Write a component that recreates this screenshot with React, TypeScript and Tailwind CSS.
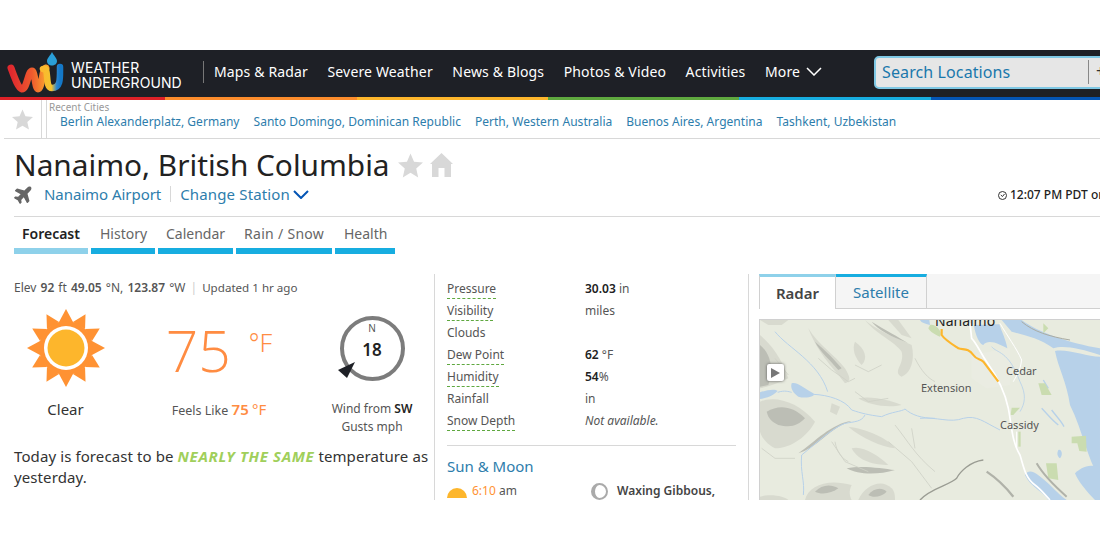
import { FaPlane } from "react-icons/fa";

const navItems = ["Maps & Radar", "Severe Weather", "News & Blogs", "Photos & Video", "Activities"];

const recentCities = [
  "Berlin Alexanderplatz, Germany",
  "Santo Domingo, Dominican Republic",
  "Perth, Western Australia",
  "Buenos Aires, Argentina",
  "Tashkent, Uzbekistan",
];

const tabs = [
  { label: "Forecast", width: "w-[74px]", bar: "bg-[#8ed1ea]", text: "pl-[8px] text-[#222] font-semibold" },
  { label: "History", width: "w-[64px]", bar: "bg-[#17ade0]", text: "pl-[9px] text-[#666]" },
  { label: "Calendar", width: "w-[75px]", bar: "bg-[#17ade0]", text: "pl-[8px] text-[#666]" },
  { label: "Rain / Snow", width: "w-[96px]", bar: "bg-[#17ade0]", text: "pl-[8px] tracking-[0.3px] text-[#666]" },
  { label: "Health", width: "w-[60px]", bar: "bg-[#17ade0]", text: "pl-[9px] text-[#666]" },
];

const conditions = [
  { label: "Pressure", dotted: true, value: <><b className="font-semibold text-[#222]">30.03</b> in</> },
  { label: "Visibility", dotted: true, value: "miles" },
  { label: "Clouds", dotted: false, value: "" },
  { label: "Dew Point", dotted: true, value: <><b className="font-semibold text-[#222]">62</b> °F</> },
  { label: "Humidity", dotted: true, value: <><b className="font-semibold text-[#222]">54</b>%</> },
  { label: "Rainfall", dotted: false, value: "in" },
  { label: "Snow Depth", dotted: true, value: <i>Not available.</i> },
];

const Chevron = ({ strokeWidth, className }: { strokeWidth: number; className?: string }) => (
  <svg width="16" height="9" viewBox="0 0 16 9" fill="none" className={className}>
    <path d="M1 1 L8 8 L15 1" stroke="currentColor" strokeWidth={strokeWidth} />
  </svg>
);

const SolidStar = ({ size }: { size: number }) => (
  <svg width={size} height={size} viewBox="0 0 24 24">
    <polygon points="12,0.5 15.4,8.4 24,9.2 17.5,14.9 19.4,23.4 12,19 4.6,23.4 6.5,14.9 0,9.2 8.6,8.4" fill="#d8d8d8" />
  </svg>
);

const House = () => (
  <svg width="23" height="24" viewBox="0 0 23 24">
    <path d="M11.5 0 L23 11 L21 11 L21 24 L14.5 24 L14.5 15 L8.5 15 L8.5 24 L2 24 L2 11 L0 11 Z" fill="#d8d8d8" />
  </svg>
);

const Logo = () => (
  <svg width="60" height="47" viewBox="0 0 60 47" fill="none" className="shrink-0">
    <path d="M6 18 C9 26 13 38 17 39 C22 39 23 21 27 21 C30 21 30 39 33 39 C37 39 37 19 41 18" stroke="url(#wuA)" strokeWidth="7" strokeLinecap="round" />
    <path d="M38 19 C45 16 39 38 47 38 C56 38 55 28 55 17" stroke="url(#wuB)" strokeWidth="6.5" strokeLinecap="round" />
    <path d="M47 2 C49 6 52 8 52 11 C52 14 49.5 15.5 47 15.5 C44.5 15.5 42 14 42 11 C42 8 45 6 47 2 Z" fill="#2a9fd8" />
    <defs>
      <linearGradient id="wuA" x1="0" y1="0" x2="1" y2="0">
        <stop offset="0" stopColor="#e0282e" />
        <stop offset="0.6" stopColor="#ee5a2e" />
        <stop offset="1" stopColor="#f9a02e" />
      </linearGradient>
      <linearGradient id="wuB" x1="0" y1="0" x2="1" y2="0">
        <stop offset="0" stopColor="#fbb92d" />
        <stop offset="0.5" stopColor="#f2c230" />
        <stop offset="0.8" stopColor="#2a86d0" />
        <stop offset="1" stopColor="#1478c8" />
      </linearGradient>
    </defs>
  </svg>
);

const SunIcon = () => {
  const rays = Array.from({ length: 12 }, (_, i) => i * 30);
  return (
    <svg width="80" height="80" viewBox="0 0 80 80">
      {rays.map((r) => (
        <polygon key={r} points="33,14 40,1 47,14" transform={`rotate(${r} 40 40)`} fill="#ff9233" />
      ))}
      <circle cx="40" cy="40" r="27" fill="#ff9233" />
      <circle cx="40" cy="40" r="22" fill="#fff" />
      <circle cx="40" cy="40" r="18.5" fill="#fdb62c" />
    </svg>
  );
};

// drawn in zoomed crop coordinates, hence the two scaled groups
const MapDrawing = () => (
  <svg width="340" height="180" viewBox="760 320 340 180" className="block">
    <rect x="760" y="320" width="340" height="180" fill="#e8ebdf" />
    <g transform="translate(755 315) scale(0.3333)">
      <g fill="#d8dacf" className="blur-[1.5px]">
        <path d="M15 60 C50 90 80 130 100 190 C70 205 40 215 15 220 Z" />
        <path d="M160 40 C190 90 240 120 270 160 C285 185 290 200 270 205 C245 170 190 120 160 40 Z" />
        <path d="M330 15 C370 50 440 75 470 90 C480 130 470 175 440 185 C410 170 450 150 440 110 C420 80 360 55 330 15 Z" />
        <path d="M430 15 L470 70 L440 60 L400 15 Z" />
        <path d="M15 260 C60 240 130 260 180 320 C160 360 110 400 60 400 C40 390 20 370 15 350 Z" />
        <path d="M280 335 C330 340 400 370 420 400 C380 395 320 370 280 335 Z" />
        <path d="M290 400 C320 390 370 420 400 450 C360 450 310 440 290 400 Z" />
        <path d="M150 555 C160 510 220 490 290 510 C280 530 285 545 290 555 Z" />
        <path d="M310 555 C330 510 380 490 410 520 C420 530 420 545 420 555 Z" />
        <path d="M15 545 C50 535 90 545 100 555 L15 555 Z" />
        <path d="M310 250 C350 240 420 260 440 270 C400 280 340 270 310 250 Z" />
        <path d="M230 265 L255 275 L245 300 L225 290 Z" />
        <path d="M300 80 C330 100 340 130 320 150 C300 130 290 100 300 80 Z" />
        <path d="M15 15 L100 15 L80 30 L40 30 Z" />
      </g>
      <g fill="#bcbeb5" className="blur-[1.5px]">
        <path d="M15 90 C40 110 60 150 40 210 L15 215 Z" />
        <path d="M180 80 C210 105 240 135 260 160 L250 165 C225 135 195 110 180 80 Z" />
        <path d="M35 290 C70 270 110 270 150 310 C130 330 110 340 70 330 C50 320 40 310 35 290 Z" />
        <path d="M130 415 C180 380 230 325 290 318 L260 330 C220 350 180 400 130 415 Z" />
        <path d="M275 460 C320 450 380 460 420 465 C370 480 310 480 275 460 Z" />
        <path d="M180 530 C200 510 225 505 250 520 C230 535 200 540 180 530 Z" />
        <path d="M340 540 C355 520 380 515 395 530 C380 545 355 550 340 540 Z" />
        <path d="M350 20 C390 45 430 65 460 85 L450 80 C410 65 370 45 350 20 Z" />
      </g>
      <g fill="none" stroke="#cfd1c6" strokeWidth="2.5">
        <path d="M190 130 L230 165 L280 200 L300 190" />
        <path d="M300 150 L340 170 L380 150" />
        <path d="M20 400 L60 430 L120 430" />
        <path d="M230 380 L270 440 L340 470" />
        <path d="M400 380 L470 440 L530 520" />
        <path d="M470 340 L480 400" />
        <path d="M60 130 L100 180" />
        <path d="M300 230 L340 260 L400 250" />
        <path d="M240 380 C245 410 260 430 280 440" />
        <path d="M420 330 C460 380 480 420 540 470" />
        <path d="M480 130 C500 170 520 190 540 200" />
      </g>
      <path d="M110 205 C125 200 140 215 175 235 C185 245 150 252 130 245 C115 235 105 220 110 205 Z" fill="#b7d1e9" />
      <path d="M15 232 C35 225 60 220 68 228 C50 245 30 250 15 252 Z" fill="#b7d1e9" />
      <g fill="none" stroke="#b7d1e9" strokeWidth="3">
        <path d="M68 232 C90 225 100 230 110 232" />
        <path d="M175 238 C220 240 270 255 290 285 C320 295 340 300 380 305 C410 290 440 290 450 282 C470 300 500 310 540 310" />
        <path d="M330 300 C320 320 300 320 270 325 C230 340 190 380 140 420 C135 470 150 500 145 540" />
        <path d="M60 50 C100 100 190 140 218 230" />
      </g>
    </g>
    <g transform="translate(920 315) scale(0.3333)">
      <path d="M155 120 L270 100 L270 210 L200 220 L155 190 Z" fill="#eaece2" className="blur-[2px]" />
      <g fill="#b7d1e9">
        <path d="M162 30 L238 28 C245 50 258 75 262 100 C240 88 205 70 190 90 C180 90 165 60 162 30 Z" />
        <path d="M0 15 L28 15 L30 30 C15 25 5 25 0 15 Z" />
        <path d="M245 15 L305 15 C350 50 450 85 540 100 L540 120 C480 100 430 90 400 100 C360 70 310 60 275 50 Z" />
        <path d="M405 108 C440 100 500 125 540 125 L540 490 C500 430 490 350 450 270 C440 200 415 160 405 108 Z" />
        <path d="M465 475 C490 450 520 450 540 455 L540 555 L525 555 C500 530 475 500 465 475 Z" />
        <path d="M315 480 C330 455 355 480 390 510 C410 530 425 545 440 555 L385 555 C370 530 330 515 315 480 Z" />
        <path d="M415 405 C425 400 430 420 420 430 C412 425 410 415 415 405 Z" />
      </g>
      <g fill="none" stroke="#b7d1e9" strokeWidth="4">
        <path d="M365 280 C380 295 395 315 415 330" />
        <path d="M395 285 C410 305 425 320 432 335" />
        <path d="M370 195 L385 220" />
        <path d="M0 310 C50 305 90 325 130 310 C170 300 190 320 240 345" strokeWidth="3" />
        <path d="M215 95 C230 115 265 105 300 200 C320 240 315 265 300 290" strokeWidth="2.5" />
      </g>
      <g fill="#cadcb0">
        <path d="M355 205 L375 205 L395 240 L365 240 Z" />
        <path d="M455 365 L498 362 L500 410 L478 408 L472 385 L455 385 Z" />
        <path d="M378 445 L410 445 L415 495 L385 490 Z" />
        <path d="M275 278 L300 278 L280 300 L272 300 Z" />
        <path d="M295 350 L302 350 L302 395 L295 395 Z" />
        <path d="M30 30 C45 25 70 50 60 65 C45 60 30 50 25 40 Z" />
        <path d="M370 25 L385 40 L370 55 Z" />
      </g>
      <g fill="none" className="blur-[1px]">
        <path d="M305 20 C340 50 390 65 450 75" stroke="#a9aba2" strokeWidth="3" />
        <path d="M200 470 C230 490 260 520 280 545" stroke="#b0b2a9" strokeWidth="7" />
        <path d="M0 555 C30 520 90 510 110 490 C120 470 150 440 190 435" stroke="#9a9c93" strokeWidth="4" />
        <path d="M350 445 C370 480 400 510 440 545" stroke="#b0b2a9" strokeWidth="6" />
      </g>
      <g fill="none" stroke="#ffffff">
        <path d="M150 25 L155 70 C170 85 185 120 200 140 C225 175 255 230 265 280 C275 330 275 380 300 420 C310 450 315 490 345 510 C365 525 380 545 390 555" strokeWidth="5" />
        <path d="M240 25 C260 60 290 100 305 135 C300 170 290 180 280 200" strokeWidth="3" />
        <path d="M290 350 L290 400" strokeWidth="3" />
      </g>
      <path d="M65 42 L65 60 C75 75 100 90 115 100 C130 105 145 98 160 120 C170 135 180 130 190 140 C205 160 220 180 235 200" fill="none" stroke="#fdb62c" strokeWidth="6.5" strokeLinejoin="round" />
    </g>
  </svg>
);

export default function App() {
  return (
    <div className="w-[1100px] h-[550px] bg-white overflow-hidden pt-[50px] font-['Noto_Sans',sans-serif] text-[#333]">
      <div className="h-[450px] overflow-hidden">
        {/* Top nav */}
        <header className="h-[47px] bg-[#1e2026] flex items-center pl-[5px] overflow-hidden">
          <Logo />
          <div className="ml-[6px] mt-[3px] w-[132px] shrink-0 text-white text-[14px] leading-[15px] tracking-[0.1px] font-['Inter',sans-serif]">
            <div>WEATHER</div>
            <div>UNDERGROUND</div>
          </div>
          <div className="w-px h-[22px] bg-[#777] shrink-0 -mt-[3px]" />
          <nav className="ml-[10px] -mt-[5px] flex items-center gap-[19.5px] text-white text-[14px] tracking-[0.15px] whitespace-nowrap">
            {navItems.map((item) => (
              <span key={item}>{item}</span>
            ))}
            <span className="flex items-center gap-[6px]">
              More <Chevron strokeWidth={1.5} />
            </span>
          </nav>
          <div className="ml-[52px] -mt-[3px] w-[260px] h-[33px] shrink-0 flex items-center bg-[#e6e6e6] border-2 border-[#7fc8e4] rounded-[5px] text-[#1a78ac] text-[16px] tracking-[0.1px] pl-[6px]">
            <span className="w-[206px] shrink-0">Search Locations</span>
            <span className="border-l border-[#888] pl-[7px] h-[24px] leading-[22px] text-[#333]">+</span>
          </div>
        </header>
        <div className="flex h-[3px]">
          <div className="w-[165px] bg-[#de2127]" />
          <div className="w-[192px] bg-[#fc8c2c]" />
          <div className="w-[191px] bg-[#fdb62c]" />
          <div className="w-[191px] bg-[#5fa83f]" />
          <div className="w-[192px] bg-[#17ade0]" />
          <div className="flex-1 bg-[#0455b5]" />
        </div>

        {/* Recent cities */}
        <div className="h-[39px] ml-[4px] flex border-b border-[#d8d8d8]">
          <div className="w-[37px] flex items-center justify-center">
            <SolidStar size={21} />
          </div>
          <div className="border-x border-[#d8d8d8] w-[6px]" />
          <div className="pl-[2px] text-[10px] leading-[12px] text-[#999] pt-[1px]">
            <div>Recent Cities</div>
            <div className="flex gap-[14px] pl-[11px] text-[12px] leading-[16px] tracking-[0.03px] text-[#2d7dac] whitespace-nowrap mt-[1px]">
              {recentCities.map((c) => (
                <span key={c}>{c}</span>
              ))}
            </div>
          </div>
        </div>

        {/* Title */}
        <div className="pl-[14px]">
          <div className="flex items-center h-[44px] pt-[8px]">
            <h1 className="text-[29.8px] leading-[36px] text-[#222] whitespace-nowrap">Nanaimo, British Columbia</h1>
            <span className="ml-[8px]"><SolidStar size={25} /></span>
            <span className="ml-[7px]"><House /></span>
          </div>
          <div className="relative flex items-center h-[24px] pb-[2px] text-[15px] text-[#2d7dac] whitespace-nowrap">
            <FaPlane className="w-[20px] h-[20px] text-[#666] -rotate-45" />
            <span className="ml-[10px] tracking-[-0.05px]">Nanaimo Airport</span>
            <span className="mx-[9px] w-px h-[16px] bg-[#d8d8d8]" />
            <span className="tracking-[0.15px]">Change Station</span>
            <Chevron strokeWidth={2} className="ml-[3px] text-[#0455b5]" />
            <span className="absolute left-[984px] top-[3px] flex items-center text-[12px] font-medium text-[#222]">
              <svg width="9" height="9" viewBox="0 0 9 9" fill="none" className="mr-[3px]">
                <circle cx="4.5" cy="4.5" r="4" stroke="#333" />
                <path d="M2.8 4 L4.5 5.5 L6.5 3" stroke="#333" />
              </svg>
              12:07 PM PDT on August 20, 2016
            </span>
          </div>
          <div className="mt-[9px] border-t border-[#d8d8d8] flex gap-[3px] pt-[7px]">
            {tabs.map((t) => (
              <div key={t.label} className={t.width}>
                <div className={`h-[21px] text-[14px] leading-[20px] whitespace-nowrap ${t.text}`}>{t.label}</div>
                <div className={`h-[6px] mt-[3px] ${t.bar}`} />
              </div>
            ))}
          </div>
        </div>

        {/* Main content */}
        <div className="mt-[20px] flex h-[250px]">
          <section className="w-[435px] shrink-0 pl-[14px] border-r border-[#d8d8d8]">
            <div className="pt-[6px] text-[12px] leading-[16px] text-[#555] whitespace-nowrap">
              Elev <b className="font-semibold mx-px">92</b> ft <b className="font-semibold mx-px">49.05</b> °N, <b className="font-semibold mx-px">123.87</b> °W
              <span className="mx-[5px] text-[#ccc]">|</span>
              <span className="text-[11.6px]">Updated 1 hr ago</span>
            </div>
            <div className="flex mt-[4px]">
              <div className="w-[103px] shrink-0 flex flex-col items-center">
                <div className="mt-[8px]"><SunIcon /></div>
                <div className="mt-[11px] text-[15px] leading-[20px] text-[#333]">Clear</div>
              </div>
              <div className="w-[204px] shrink-0 flex flex-col items-center">
                <div className="flex items-start h-[85px] text-[#ff8c42] pt-[14px]">
                  <span className="text-[57px] leading-[72px] font-light font-['Open_Sans',sans-serif]">75</span>
                  <span className="ml-[18px] mt-[13px] text-[25px] leading-[30px] font-light">°F</span>
                </div>
                <div className="mt-[14px] text-[12.5px] leading-[20px] text-[#555]">
                  Feels Like <b className="text-[15px] font-semibold text-[#ff8c42]">75</b> <span className="text-[15px] text-[#ff8c42]">°F</span>
                </div>
              </div>
              <div className="w-[102px] shrink-0 flex flex-col items-center text-[12px] leading-[18px] text-[#555] whitespace-nowrap">
                <div className="relative mt-[16px] w-[65px] h-[65px] rounded-full border-[4px] border-[#7c7c7c] flex flex-col items-center pt-[2px]">
                  <span className="text-[10px] leading-[12px]">N</span>
                  <span className="mt-[5px] text-[17px] leading-[22px] font-semibold text-[#222]">18</span>
                  <svg className="absolute left-[-6px] top-[42px]" width="18" height="17" viewBox="0 0 18 17">
                    <polygon points="17,0 0,8 9,16" fill="#1e2026" />
                  </svg>
                </div>
                <div className="mt-[19px]">Wind from <b className="font-semibold text-[#222]">SW</b></div>
                <div>Gusts mph</div>
              </div>
            </div>
            <p className="mt-[10px] text-[15px] leading-[21px] tracking-[0.1px] text-[#333]">
              Today is forecast to be <b className="italic font-bold tracking-[0.65px] text-[#a0cf5b]">NEARLY THE SAME</b> temperature as yesterday.
            </p>
          </section>

          <section className="w-[314px] shrink-0 px-[12px] border-r border-[#d8d8d8] text-[12px] text-[#555]">
            <div className="pt-[4px]">
              {conditions.map((row) => (
                <div key={row.label} className="flex h-[22px] items-center">
                  <div className="w-[138px]">
                    <span className={row.dotted ? "pb-px border-b border-dashed border-[#5fa83f]" : ""}>{row.label}</span>
                  </div>
                  <div>{row.value}</div>
                </div>
              ))}
            </div>
            <div className="mt-[13px] border-t border-[#d8d8d8] pt-[10px] text-[15px] leading-[20px] text-[#2d7dac]">Sun &amp; Moon</div>
            <div className="flex mt-[6px]">
              <div className="w-[144px] flex items-center">
                <span className="w-[20px] h-[10px] rounded-t-full bg-[#fdb62c] mt-[4px]" />
                <span className="ml-[5px]"><span className="text-[#ff9233]">6:10</span> am</span>
              </div>
              <div className="flex items-center">
                <span className="w-[17px] h-[17px] rounded-full border-[2px] border-[#aaa] border-l-[4px]" />
                <b className="ml-[9px] font-semibold text-[#444]">Waxing Gibbous,</b>
              </div>
            </div>
          </section>

          <section className="pl-[10px] flex-1 min-w-0">
            <div className="flex h-[35px] bg-[#f5f5f5] border-b border-[#d0d0d0] text-[15px]">
              <div className="w-[77px] bg-white border-t-[3px] border-t-[#8ed1ea] border-l border-l-[#d0d0d0] border-r border-r-[#d0d0d0] -mb-px flex items-center justify-center font-semibold text-[#444]">Radar</div>
              <div className="w-[91px] border-t-[3px] border-t-[#17ade0] border-r border-r-[#d0d0d0] flex items-center justify-center text-[#2d7dac]">Satellite</div>
            </div>
            <div className="relative mt-[10px] border-l border-t border-[#d0d0d0] h-[181px] overflow-hidden text-[11px] text-[#555]">
              <MapDrawing />
              <span className="absolute left-[175px] top-[-10px] text-[14px] text-[#222]">Nanaimo</span>
              <span className="absolute left-[161px] top-[60px]">Extension</span>
              <span className="absolute left-[246px] top-[43px]">Cedar</span>
              <span className="absolute left-[240px] top-[97px]">Cassidy</span>
              <span className="absolute left-[7px] top-[44px] w-[17px] h-[17px] bg-white rounded-[2px] shadow-[0_0_3px_#555] flex items-center justify-center">
                <span className="w-0 h-0 border-y-[5px] border-y-transparent border-l-[9px] border-l-[#777]" />
              </span>
            </div>
          </section>
        </div>
      </div>
    </div>
  );
}
